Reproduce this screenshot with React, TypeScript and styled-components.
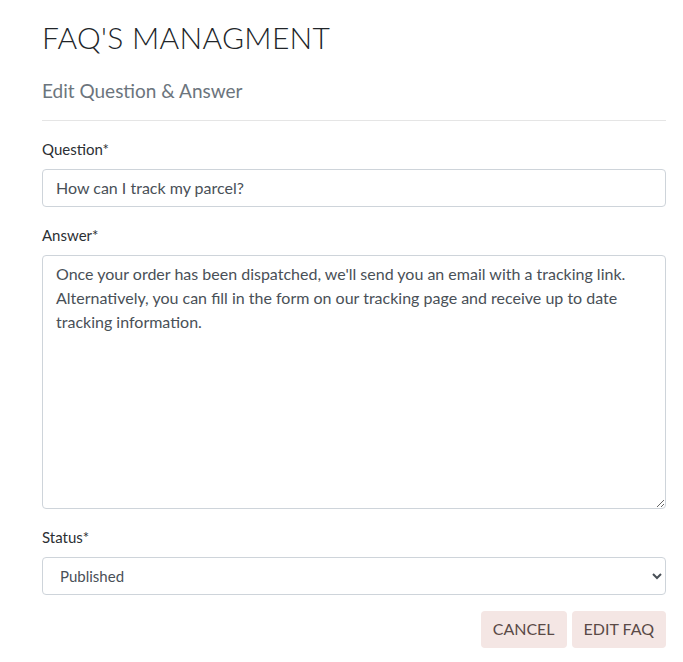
import React from "react";
import styled, { createGlobalStyle } from "styled-components";

const Global = createGlobalStyle`
  html, body { margin: 0; padding: 0; background: #fff; }
  body {
    font-family: Lato, "Noto Sans", sans-serif;
    color: #212529;
    font-size: 16px;
    line-height: 1.5;
  }
  * { box-sizing: border-box; }
`;

const Page = styled.div`
  width: 624px;
  margin-left: 42px;
  padding-top: 19px;
`;

const Title = styled.h1`
  margin: 0 0 24px;
  font-size: 30px;
  font-weight: 300;
  line-height: 1.2;
  letter-spacing: 0.3px;
  color: #212529;
`;

const Subtitle = styled.h2`
  margin: 0;
  font-size: 19px;
  font-weight: 400;
  line-height: 1.3;
  color: #6c757d;
`;

const Rule = styled.hr`
  margin: 16px 0;
  border: 0;
  border-top: 1px solid rgba(0, 0, 0, 0.1);
`;

const Group = styled.div`
  margin-bottom: 16px;
`;

const Label = styled.label`
  display: block;
  margin-bottom: 8px;
  font-size: 15px;
  line-height: 24px;
  color: #2b2f33;
`;

const fieldBase = `
  display: block;
  width: 100%;
  font-family: Lato, "Noto Sans", sans-serif;
  font-size: 16px;
  line-height: 24px;
  color: #495057;
  background: #fff;
  border: 1px solid #ced4da;
  border-radius: 4px;
  outline: none;
`;

const Input = styled.input`
  ${fieldBase}
  height: 38px;
  padding: 6px 13px;
`;

const TextArea = styled.textarea`
  ${fieldBase}
  height: 254px;
  padding: 6px 13px;
  resize: vertical;
`;

const Select = styled.select`
  ${fieldBase}
  height: 38px;
  padding: 6px 12px 6px 13px;
  font-size: 15px;
`;

const Actions = styled.div`
  display: flex;
  justify-content: flex-end;
  gap: 5px;
`;

const Button = styled.button`
  font-family: Lato, "Noto Sans", sans-serif;
  font-size: 16px;
  line-height: 24px;
  padding: 6px 12px;
  height: 37px;
  border: 0;
  border-radius: 4px;
  background: #f4e6e4;
  color: #5a4a47;
  text-transform: uppercase;
  cursor: pointer;
`;

export default function App() {
  return (
    <>
      <Global />
      <Page>
        <Title>FAQ'S MANAGMENT</Title>
        <Subtitle>Edit Question &amp; Answer</Subtitle>
        <Rule />
        <form onSubmit={(e) => e.preventDefault()}>
          <Group>
            <Label htmlFor="q">Question*</Label>
            <Input id="q" defaultValue="How can I track my parcel?" />
          </Group>
          <Group>
            <Label htmlFor="a">Answer*</Label>
            <TextArea
              id="a"
              defaultValue="Once your order has been dispatched, we'll send you an email with a tracking link. Alternatively, you can fill in the form on our tracking page and receive up to date tracking information."
            />
          </Group>
          <Group>
            <Label htmlFor="s">Status*</Label>
            <Select id="s" defaultValue="published">
              <option value="published">Published</option>
              <option value="draft">Draft</option>
            </Select>
          </Group>
          <Actions>
            <Button type="button">Cancel</Button>
            <Button type="submit">Edit FAQ</Button>
          </Actions>
        </form>
      </Page>
    </>
  );
}
